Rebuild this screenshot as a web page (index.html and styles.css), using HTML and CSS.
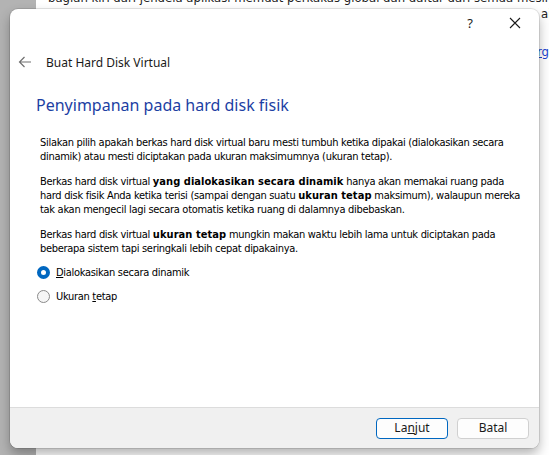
FILE: index.html
```html
<!DOCTYPE html>
<html lang="id">
<head>
<meta charset="utf-8">
<link rel="stylesheet" href="styles.css">
</head>
<body>
<div class="backdrop">
  <div class="side"></div>
  <div class="page">
    <p class="bg-line l1">bagian kiri dari jendela aplikasi memuat perkakas global dan daftar dari semua mesin virtual dan grup mesin</p>
    <p class="bg-line l2">ai.</p>
    <p class="bg-line l3"><a>rg</a></p>
  </div>
</div>

<div class="dialog">
  <div class="titlebar">
    <span class="tb-btn help">?</span>
    <span class="tb-btn close">
      <svg width="12" height="12" viewBox="0 0 12 12"><path d="M1 1 L11 11 M11 1 L1 11" stroke="#1a1a1a" stroke-width="1.1" fill="none"/></svg>
    </span>
  </div>
  <div class="header">
    <svg class="back" width="14" height="12" viewBox="0 0 14 12"><path d="M13 6 H1.5 M6.5 1 L1.5 6 L6.5 11" stroke="#707070" stroke-width="1.2" fill="none"/></svg>
    <span class="wtitle">Buat Hard Disk Virtual</span>
  </div>
  <div class="body">
    <h1 class="heading">Penyimpanan pada hard disk fisik</h1>
    <p class="para">Silakan pilih apakah berkas hard disk virtual baru mesti tumbuh ketika dipakai (dialokasikan secara dinamik) atau mesti diciptakan pada ukuran maksimumnya (ukuran tetap).</p>
    <p class="para">Berkas hard disk virtual <b>yang dialokasikan secara dinamik</b> hanya akan memakai ruang pada hard disk fisik Anda ketika terisi (sampai dengan suatu <b>ukuran tetap</b> maksimum), walaupun mereka tak akan mengecil lagi secara otomatis ketika ruang di dalamnya dibebaskan.</p>
    <p class="para">Berkas hard disk virtual <b>ukuran tetap</b> mungkin makan waktu lebih lama untuk diciptakan pada beberapa sistem tapi seringkali lebih cepat dipakainya.</p>
    <div class="radios">
      <label class="radio"><span class="dot on"></span><span><u>D</u>ialokasikan secara dinamik</span></label>
      <label class="radio"><span class="dot"></span><span>Ukuran <u>t</u>etap</span></label>
    </div>
  </div>
  <div class="footer">
    <button class="btn primary">La<u>n</u>jut</button>
    <button class="btn">Batal</button>
  </div>
</div>
</body>
</html>
```
FILE: styles.css
```css
html, body {
  margin: 0;
  padding: 0;
}
body {
  width: 549px;
  height: 455px;
  overflow: hidden;
  position: relative;
  font-family: "Noto Sans", "DejaVu Sans", sans-serif;
  background: #ffffff;
}
.backdrop {
  display: flex;
  height: 455px;
  overflow: hidden;
}
.side {
  width: 36px;
  flex: none;
  background: #b3b3b3;
}
.page {
  flex: 1;
  min-width: 0;
  overflow: hidden;
  background: #ffffff;
  font-family: "DejaVu Sans Condensed", "DejaVu Sans", sans-serif;
  font-size: 13px;
  color: #222;
}
.bg-line {
  margin: 0;
  white-space: nowrap;
  line-height: 16px;
}
.l1 { margin-top: -10px; padding-left: 12px; }
.l2 { padding-left: 505px; margin-top: 0; }
.l3 { padding-left: 501px; margin-top: 22px; }
.l3 a { color: #1a3fd0; text-decoration: underline; }

.dialog {
  position: absolute;
  left: 10px;
  top: 9px;
  width: 529px;
  height: 439px;
  background: #ffffff;
  border-radius: 8px;
  box-shadow: 0 6px 12px rgba(0, 0, 0, 0.3), 0 0 0 1px rgba(0, 0, 0, 0.1);
  display: flex;
  flex-direction: column;
  overflow: hidden;
}
.titlebar {
  height: 28px;
  display: flex;
  justify-content: flex-end;
  align-items: center;
}
.tb-btn {
  display: flex;
  align-items: center;
  justify-content: center;
  font-size: 13px;
  color: #1a1a1a;
}
.help { width: 20px; margin-right: 25px; }
.close { width: 20px; margin-right: 14px; }
.header {
  height: 28px;
  display: flex;
  align-items: center;
  padding-left: 8px;
  margin-top: 11px;
}
.back { margin-right: 14px; }
.wtitle {
  font-size: 12px;
  color: #1a1a1a;
}
.body {
  flex: 1;
  padding: 0 14px 0 26px;
  font-family: "DejaVu Sans Condensed", "DejaVu Sans", sans-serif;
  font-size: 11px;
  letter-spacing: -0.3px;
  color: #000;
}
.heading {
  margin: 18px 0 20px 0;
  font-family: "Noto Sans", sans-serif;
  font-weight: normal;
  font-size: 16px;
  line-height: 22px;
  letter-spacing: 0;
  color: #1d3fa3;
}
.para {
  margin: 0 0 11px 4px;
  line-height: 14px;
}
.para b {
  font-weight: bold;
  letter-spacing: 0.05px;
}
.radios {
  display: flex;
  flex-direction: column;
  gap: 9px;
  margin-top: -2px;
}
.radio {
  display: flex;
  align-items: center;
  gap: 6px;
  height: 15px;
  line-height: 15px;
  font-size: 11px;
}
.dot {
  width: 11px;
  height: 11px;
  border-radius: 50%;
  border: 1px solid #8a8a8a;
  background: #f6f6f6;
  box-sizing: content-box;
  margin-left: 1px;
}
.dot.on {
  width: 5px;
  height: 5px;
  border: 4px solid #0067c0;
  background: #ffffff;
}
.footer {
  height: 41px;
  flex: none;
  background: #f0f0f0;
  border-top: 1px solid #dcdcdc;
  display: flex;
  justify-content: flex-end;
  align-items: center;
  gap: 9px;
  padding-right: 10px;
  box-sizing: border-box;
}
.btn {
  width: 72px;
  height: 21px;
  background: #fdfdfd;
  border: 1px solid #d0d0d0;
  border-radius: 4px;
  font-family: "Noto Sans", sans-serif;
  font-size: 12px;
  color: #1a1a1a;
  padding: 0;
  line-height: 18px;
}
.btn.primary {
  border-color: #0067c0;
}
```
